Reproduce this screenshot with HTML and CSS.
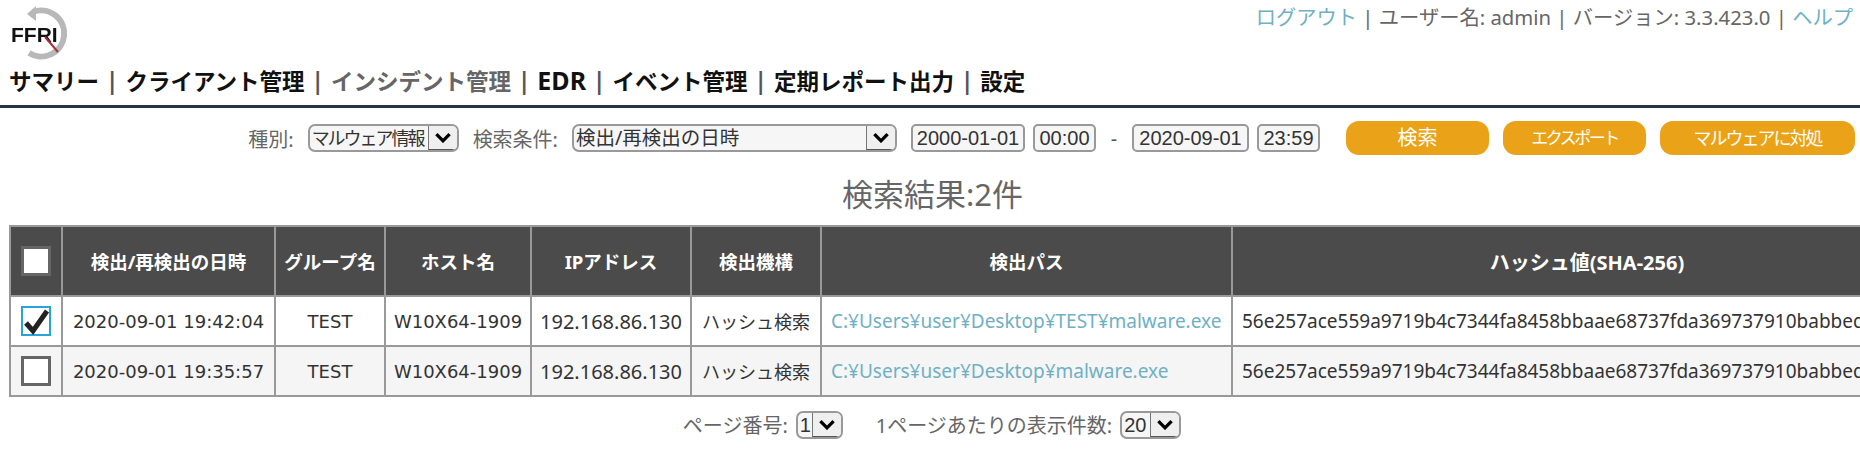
FILE: index.html
```html
<!DOCTYPE html>
<html>
<head>
    <meta charset="utf-8"/>
    <title>FFRI</title>
    <link rel="stylesheet" href="styles.css">
</head>
<body>
<div class="header">
    <div class="logo">
        <svg width="70" height="64" viewBox="8 0 70 64">
            <path d="M33 12 A23 23 0 1 1 29 53" fill="none" stroke="#b8b8b8" stroke-width="6"/>
            <path d="M36 6 L36 21 L27 14 Z" fill="#b8b8b8"/>
            <text x="11" y="42" class="logo-text">FFRI</text>
            <line x1="45" y1="37" x2="58" y2="52" stroke="#a8323a" stroke-width="2"/>
        </svg>
    </div>
    <div class="user-info">
        <a>ログアウト</a> | ユーザー名: admin | バージョン: 3.3.423.0 | <a>ヘルプ</a>
    </div>
</div>
<div class="menu">
    <a>サマリー</a><i>|</i><a>クライアント管理</a><i>|</i><a class="active">インシデント管理</a><i>|</i><a class="edr">EDR</a><i>|</i><a>イベント管理</a><i>|</i><a>定期レポート出力</a><i>|</i><a>設定</a>
</div>
<div class="search-row">
    <span class="label">種別:</span>
    <div class="select kind"><span>マルウェア情報</span><b><svg width="18" height="11" viewBox="0 0 16 10"><path d="M2 2 L8 8 L14 2" fill="none" stroke="#000" stroke-width="3"/></svg></b></div>
    <span class="label">検索条件:</span>
    <div class="select cond"><span>検出/再検出の日時</span><b><svg width="18" height="11" viewBox="0 0 16 10"><path d="M2 2 L8 8 L14 2" fill="none" stroke="#000" stroke-width="3"/></svg></b></div>
    <div class="date-box">
        <input class="date" value="2000-01-01"/>
        <input class="time" value="00:00"/>
        <span class="dash">-</span>
        <input class="date to" value="2020-09-01"/>
        <input class="time" value="23:59"/>
    </div>
    <div class="buttons">
        <a class="btn">検索</a>
        <a class="btn export">エクスポート</a>
        <a class="btn wide">マルウェアに対処</a>
    </div>
</div>
<h2 class="result-title">検索結果:2件</h2>
<div class="table-wrap">
    <table class="result">
        <thead>
        <tr>
            <th class="c-check"><div class="check head"></div></th>
            <th class="c-date">検出/再検出の日時</th>
            <th class="c-group">グループ名</th>
            <th class="c-host">ホスト名</th>
            <th class="c-ip">IPアドレス</th>
            <th class="c-engine">検出機構</th>
            <th class="c-path">検出パス</th>
            <th class="c-hash">ハッシュ値(SHA-256)</th>
        </tr>
        </thead>
        <tbody>
        <tr>
            <td><div class="check on"><svg width="28" height="28" viewBox="0 0 28 28"><path d="M3 15 L10 23 L24 3" fill="none" stroke="#222" stroke-width="5"/></svg></div></td>
            <td class="num">2020-09-01 19:42:04</td>
            <td class="num">TEST</td>
            <td class="num">W10X64-1909</td>
            <td class="ip">192.168.86.130</td>
            <td>ハッシュ検索</td>
            <td class="left"><a>C:¥Users¥user¥Desktop¥TEST¥malware.exe</a></td>
            <td class="left">56e257ace559a9719b4c7344fa8458bbaae68737fda369737910babbed3b3a1c</td>
        </tr>
        <tr class="even">
            <td><div class="check"></div></td>
            <td class="num">2020-09-01 19:35:57</td>
            <td class="num">TEST</td>
            <td class="num">W10X64-1909</td>
            <td class="ip">192.168.86.130</td>
            <td>ハッシュ検索</td>
            <td class="left"><a>C:¥Users¥user¥Desktop¥malware.exe</a></td>
            <td class="left">56e257ace559a9719b4c7344fa8458bbaae68737fda369737910babbed3b3a1c</td>
        </tr>
        </tbody>
    </table>
</div>
<div class="pager">
    <span class="label">ページ番号:</span>
    <div class="select page"><span>1</span><b><svg width="18" height="11" viewBox="0 0 16 10"><path d="M2 2 L8 8 L14 2" fill="none" stroke="#000" stroke-width="3"/></svg></b></div>
    <span class="label per-page">1ページあたりの表示件数:</span>
    <div class="select count"><span>20</span><b><svg width="18" height="11" viewBox="0 0 16 10"><path d="M2 2 L8 8 L14 2" fill="none" stroke="#000" stroke-width="3"/></svg></b></div>
</div>
</body>
</html>
```

FILE: styles.css
```css
html,
body {
    margin: 0;
    padding: 0;
    width: 1860px;
    height: 451px;
    overflow: hidden;
    background: #fff;
    color: #333;
    font-family: "Noto Sans", "Noto Sans CJK JP", sans-serif;
}

.header {
    height: 64px;
    display: flex;
    justify-content: space-between;
    padding: 0 7px 0 8px;
}

.logo svg {
    display: block;
    filter: blur(0.4px);
}

.logo-text {
    font-family: "Liberation Sans", sans-serif;
    font-weight: bold;
    font-size: 21px;
    fill: #111;
}

.user-info {
    font-size: 20.3px;
    line-height: 24px;
    padding-top: 5px;
    color: #666;
}

.user-info a {
    color: #6fb0c4;
}

.menu {
    height: 32px;
    padding: 0 0 9px 9px;
    display: flex;
    align-items: center;
    font-size: 22.5px;
    font-weight: bold;
    color: #111;
    border-bottom: 3px solid #223448;
}

.menu .active {
    color: #666;
}

.menu .edr {
    font-size: 25px;
}

.menu i {
    font-style: normal;
    color: #555;
    padding: 0 7px;
}

.search-row {
    height: 34px;
    margin-top: 13px;
    padding-right: 5px;
    display: flex;
    justify-content: flex-end;
    align-items: center;
    font-size: 20px;
}

.label {
    color: #666;
    margin-right: 14px;
}

.select {
    display: flex;
    height: 24px;
    border: 2px solid #999;
    border-radius: 7px;
    background: #f6f6f6;
    font-size: 18px;
    line-height: 24px;
    color: #333;
    margin-right: 14px;
    overflow: hidden;
}

.select span {
    flex: 1;
    padding-left: 2px;
    white-space: nowrap;
}

.select b {
    width: 28px;
    display: flex;
    align-items: center;
    justify-content: center;
    background: #efefef;
    border-left: 1px solid #777;
    border-bottom: 1px solid #555;
}

.select.kind {
    width: 147px;
    letter-spacing: -2px;
}

.select.cond {
    width: 321px;
    font-size: 19.5px;
}

.select.page {
    width: 43px;
}

.select.count {
    width: 57px;
    margin-right: 0;
}

.pager .select span {
    font-family: "Liberation Sans", sans-serif;
    font-size: 20px;
}

.date-box {
    display: flex;
    align-items: center;
    gap: 8px;
}

.date-box input {
    box-sizing: border-box;
    height: 28px;
    border: 2px solid #999;
    border-radius: 5px;
    background: #f6f6f6;
    padding: 0;
    text-align: center;
    font-family: "Liberation Sans", sans-serif;
    font-size: 20px;
    color: #333;
}

.date-box .date {
    width: 114px;
}

.date-box .date.to {
    width: 117px;
}

.date-box .time {
    width: 63px;
}

.dash {
    width: 20px;
    text-align: center;
    color: #555;
}

.buttons {
    display: flex;
    gap: 14px;
    margin-left: 26px;
}

.btn {
    width: 143px;
    height: 34px;
    line-height: 34px;
    border-radius: 13px;
    background: #eaa218;
    color: #fff;
    text-align: center;
    font-size: 20px;
}

.btn.export {
    font-size: 17px;
    letter-spacing: -2.5px;
}

.btn.wide {
    width: 195px;
    font-size: 18px;
    letter-spacing: -2px;
}

.result-title {
    margin: 0;
    height: 62px;
    padding: 11px 0 0 5px;
    line-height: 56px;
    font-size: 31px;
    font-weight: normal;
    text-align: center;
    color: #666;
    box-sizing: border-box;
}

.table-wrap {
    margin-top: 8px;
    padding-left: 9px;
}

.result {
    table-layout: fixed;
    border-collapse: collapse;
    width: 1934px;
    font-size: 18px;
    color: #333;
}

.result th,
.result td {
    border: 2px solid #999;
    padding: 0;
    text-align: center;
    white-space: nowrap;
    overflow: hidden;
}

.result th {
    height: 68px;
    background: #4b4b4b;
    color: #fff;
    font-size: 18.5px;
    font-weight: bold;
}

.result .c-hash {
    font-size: 20px;
}

.result td {
    height: 48px;
}

.result .even td {
    background: #f5f5f5;
}

.result .left {
    text-align: left;
    padding-left: 9px;
    font-size: 19px;
}

.result .num {
    font-family: "DejaVu Sans", "Noto Sans CJK JP", sans-serif;
    font-size: 18px;
}

.result .ip {
    font-size: 20px;
}

.result a {
    color: #6fb0c4;
}

.c-check { width: 50px; }
.c-date { width: 211px; }
.c-group { width: 108px; }
.c-host { width: 144px; }
.c-ip { width: 158px; }
.c-engine { width: 128px; }
.c-path { width: 409px; }

.check {
    box-sizing: border-box;
    width: 30px;
    height: 30px;
    margin: 0 auto;
    background: #fff;
    border: 3px solid #666;
}

.check.on {
    border-color: #29a3dc;
    border-width: 2px;
}

.check svg {
    display: block;
}

.pager {
    margin-top: 13px;
    display: flex;
    justify-content: center;
    align-items: center;
    font-size: 20px;
    padding-left: 4px;
}

.pager .label {
    margin-right: 8px;
}

.pager .select {
    margin-right: 33px;
}

.pager .select.count {
    margin-right: 0;
}
```
